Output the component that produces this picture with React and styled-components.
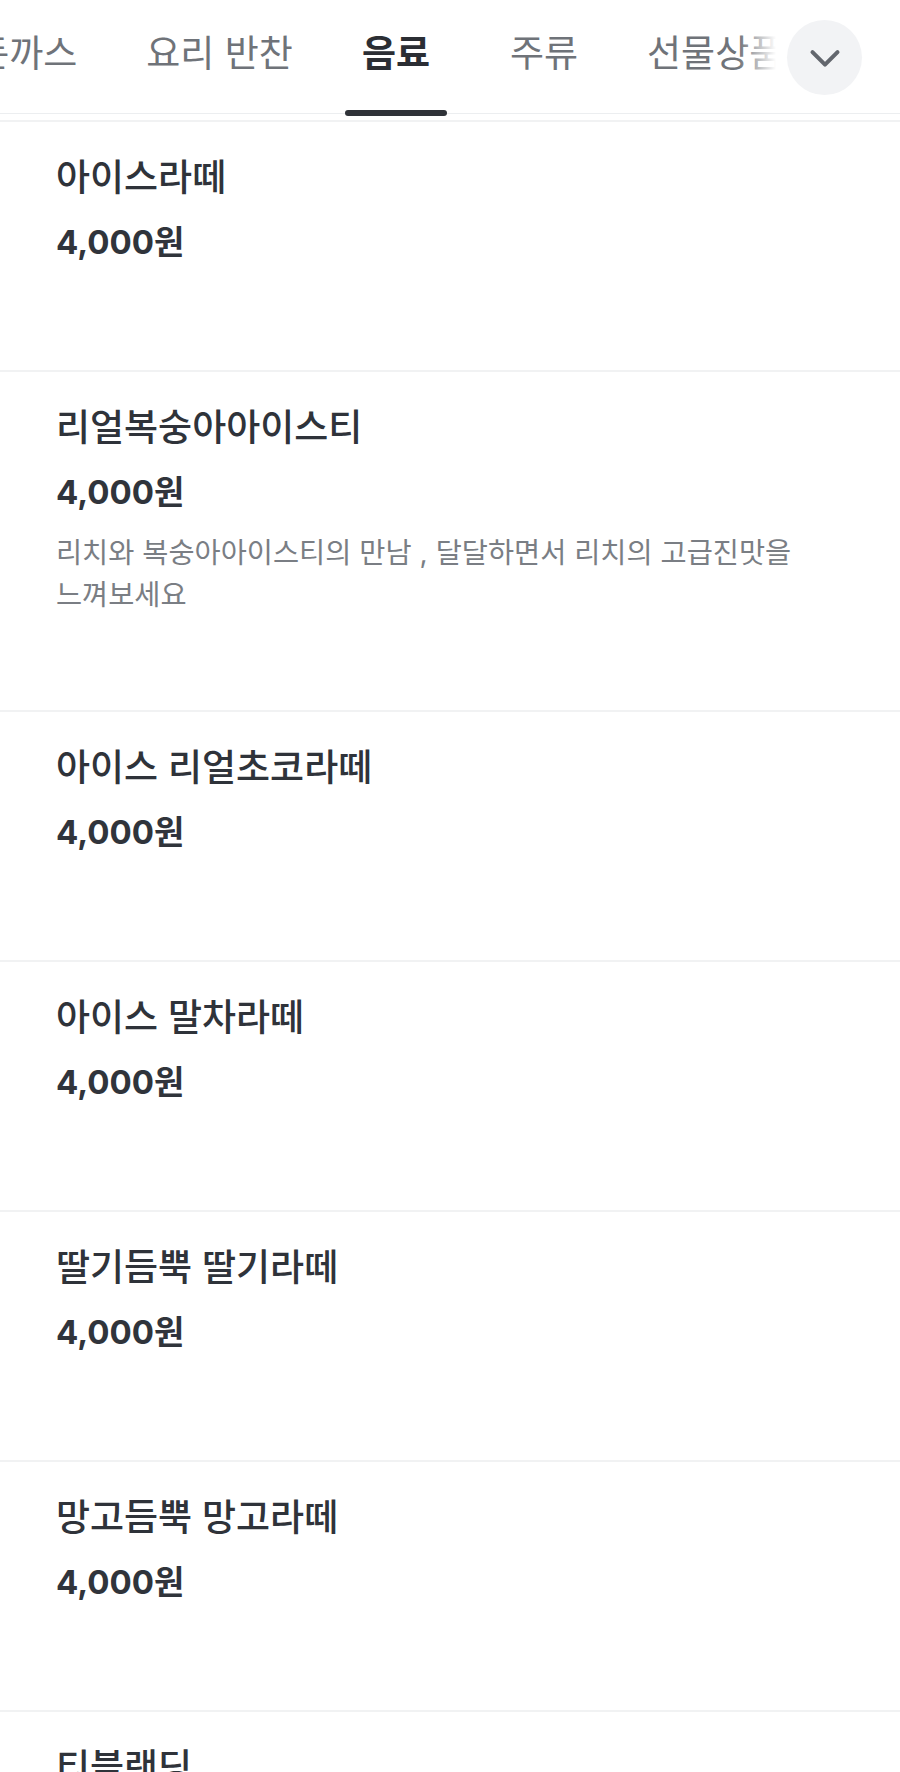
import React, { useEffect, useRef } from 'react';
import styled, { createGlobalStyle } from 'styled-components';

const GlobalStyle = createGlobalStyle`
  * { box-sizing: border-box; }
  body {
    margin: 0;
    background: #fff;
    font-family: Inter, "Noto Sans CJK KR", "Noto Sans", sans-serif;
    -webkit-font-smoothing: antialiased;
  }
`;

const Page = styled.div`
  width: 900px;
  background: #fff;
`;

const Header = styled.header`
  position: relative;
  height: 116px;
  background: linear-gradient(#eceef0, #eceef0) 0 113px / 100% 1px no-repeat, #fff;
`;

const TabStrip = styled.nav`
  display: flex;
  gap: 35px;
  height: 100%;
  overflow-x: auto;
  scrollbar-width: none;

  &::-webkit-scrollbar {
    display: none;
  }
`;

const Tab = styled.button`
  position: relative;
  flex: none;
  height: 100%;
  margin-right: ${({ $active }) => ($active ? '11px' : '0')};
  padding: 0 17px 14px;
  border: 0;
  background: none;
  font-family: inherit;
  font-size: 37px;
  font-weight: ${({ $active }) => ($active ? 700 : 400)};
  color: ${({ $active }) => ($active ? '#2b2e34' : '#6f7379')};
  white-space: nowrap;
  cursor: pointer;

  &::after {
    content: '';
    display: ${({ $active }) => ($active ? 'block' : 'none')};
    position: absolute;
    left: 0;
    right: 0;
    bottom: 0;
    height: 6px;
    border-radius: 3px;
    background: #2f3238;
  }
`;

const Fade = styled.div`
  position: absolute;
  top: 0;
  right: 0;
  width: 162px;
  height: 110px;
  pointer-events: none;
  background: linear-gradient(to right, rgba(255, 255, 255, 0) 0, #fff 38px);
`;

const MoreButton = styled.button`
  position: absolute;
  top: 20px;
  right: 38px;
  width: 75px;
  height: 75px;
  display: flex;
  align-items: center;
  justify-content: center;
  padding: 0;
  border: 0;
  border-radius: 50%;
  background: #f2f3f5;
  color: #62666d;
`;

const MenuList = styled.ul`
  list-style: none;
  margin: 4px 0 0;
  padding: 0;
`;

const MenuItem = styled.li`
  border-top: 2px solid #f1f2f3;
  padding: 32px 56px 94px;
`;

const Info = styled.div`
  min-height: 122px;
`;

const Name = styled.h3`
  margin: 0;
  font-size: 37px;
  line-height: 48px;
  font-weight: 500;
  color: #2f333a;
`;

const Price = styled.p`
  margin: 16px 0 0;
  font-size: 33px;
  line-height: 48px;
  font-weight: 700;
  color: #30343b;
`;

const Description = styled.p`
  margin: 16px 0 0;
  font-size: 28.4px;
  line-height: 42px;
  color: #7a7e84;
  word-break: keep-all;
`;

const tabs = ['추천메뉴', '돈까스', '요리 반찬', '음료', '주류', '선물상품'];

const menu = [
  { name: '아이스라떼', price: 4000 },
  {
    name: '리얼복숭아아이스티',
    price: 4000,
    desc: '리치와 복숭아아이스티의 만남 , 달달하면서 리치의 고급진맛을 느껴보세요',
  },
  { name: '아이스 리얼초코라떼', price: 4000 },
  { name: '아이스 말차라떼', price: 4000 },
  { name: '딸기듬뿍 딸기라떼', price: 4000 },
  { name: '망고듬뿍 망고라떼', price: 4000 },
  { name: '티블랜딩', price: 4000 },
];

const ChevronDown = () => (
  <svg width="40" height="40" viewBox="0 0 24 24" fill="none" stroke="currentColor" strokeWidth="2.4" strokeLinecap="round" strokeLinejoin="round">
    <path d="M4.5 8.5l7.5 7.5 7.5-7.5" />
  </svg>
);

const App = () => {
  const stripRef = useRef(null);
  const anchorRef = useRef(null);

  // keep the strip scrolled so "요리 반찬" sits where it does in the design
  useEffect(() => {
    if (stripRef.current && anchorRef.current) {
      stripRef.current.scrollLeft = anchorRef.current.offsetLeft - 129;
    }
  }, []);

  return (
    <Page>
      <GlobalStyle />
      <Header>
        <TabStrip ref={stripRef}>
          {tabs.map((t) => (
            <Tab key={t} $active={t === '음료'} ref={t === '요리 반찬' ? anchorRef : null}>
              {t}
            </Tab>
          ))}
          <Tab aria-hidden style={{ visibility: 'hidden' }}>여백여백</Tab>
        </TabStrip>
        <Fade />
        <MoreButton aria-label="전체 카테고리">
          <ChevronDown />
        </MoreButton>
      </Header>
      <MenuList>
        {menu.map((m) => (
          <MenuItem key={m.name}>
            <Info>
              <Name>{m.name}</Name>
              <Price>{m.price.toLocaleString('ko-KR')}원</Price>
              {m.desc && <Description>{m.desc}</Description>}
            </Info>
          </MenuItem>
        ))}
      </MenuList>
    </Page>
  );
};

export default App;
